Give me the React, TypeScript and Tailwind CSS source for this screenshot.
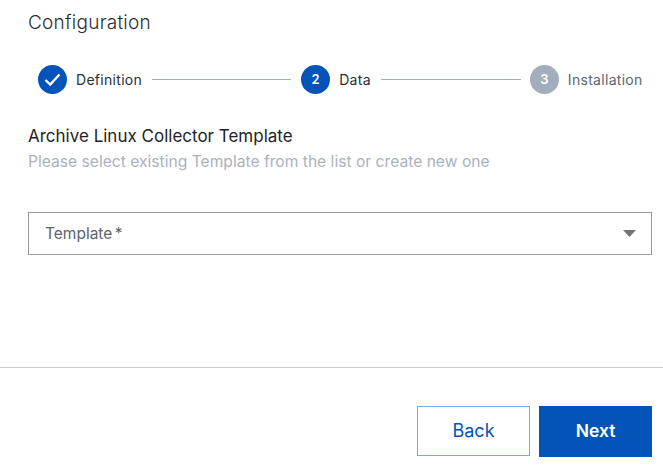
const font = { fontFamily: 'Inter, sans-serif' };

function Step({ state, num, label }: { state: 'done' | 'active' | 'todo'; num: number; label: string }) {
  const circle = state === 'todo' ? 'bg-[#a3aebd]' : 'bg-[#0353b8]';
  const text = state === 'todo' ? 'text-[#5c6470]' : 'text-[#2a2e34]';
  return (
    <div className="flex items-center shrink-0">
      <div className={`w-[29px] h-[29px] rounded-full flex items-center justify-center text-white text-[13px] font-semibold ${circle}`}>
        {state === 'done' ? (
          <svg width="19" height="19" viewBox="0 0 19 19" fill="none">
            <path d="M2.5 10 L7.2 14.5 L16.5 4.5" stroke="white" strokeWidth="2.4" />
          </svg>
        ) : (
          num
        )}
      </div>
      <span className={`ml-[9px] text-[14px] leading-[16px] tracking-[0.3px] ${text}`}>{label}</span>
    </div>
  );
}

export default function App() {
  return (
    <div style={font} className="w-[663px] h-[474px] bg-white flex flex-col overflow-hidden">
      <div className="h-[367px] pl-[28px] pr-[11px] flex flex-col">
        <h1 className="mt-[11px] text-[19px] leading-[24px] font-light tracking-[0.25px] text-[#2a2e34]">Configuration</h1>
        <div className="mt-[30px] ml-[10px] flex items-center">
          <Step state="done" num={1} label="Definition" />
          <div className="ml-[10px] mr-[10px] w-[139px] h-px bg-[#a3aebd]" />
          <Step state="active" num={2} label="Data" />
          <div className="ml-[10px] mr-[9px] w-[140px] h-px bg-[#a3aebd]" />
          <Step state="todo" num={3} label="Installation" />
        </div>
        <h2 className="mt-[32px] text-[17px] leading-[20px] font-normal text-[#1f2226]">Archive Linux Collector Template</h2>
        <p className="mt-[6px] text-[15.63px] leading-[20px] text-[#aab2bf]">Please select existing Template from the list or create new one</p>
        <div className="mt-[40px] h-[43px] border border-[#9b9b9b] flex items-center justify-between pl-[16px] pr-[15px]">
          <span className="text-[15.5px] text-[#5c6470] [word-spacing:-2px]">Template *</span>
          <svg width="13" height="7" viewBox="0 0 13 7">
            <path d="M0 0 H13 L6.5 7 Z" fill="#757575" />
          </svg>
        </div>
      </div>
      <div className="border-t border-[#cccccc] flex justify-end gap-[9px] pt-[38px] pr-[11px]">
        <button className="w-[113px] h-[50px] pb-px border border-[#7da8dc] bg-white text-[#0353b8] text-[18px] font-normal">Back</button>
        <button className="w-[113px] h-[51px] bg-[#0353b8] text-white text-[17.5px] font-semibold">Next</button>
      </div>
    </div>
  );
}
